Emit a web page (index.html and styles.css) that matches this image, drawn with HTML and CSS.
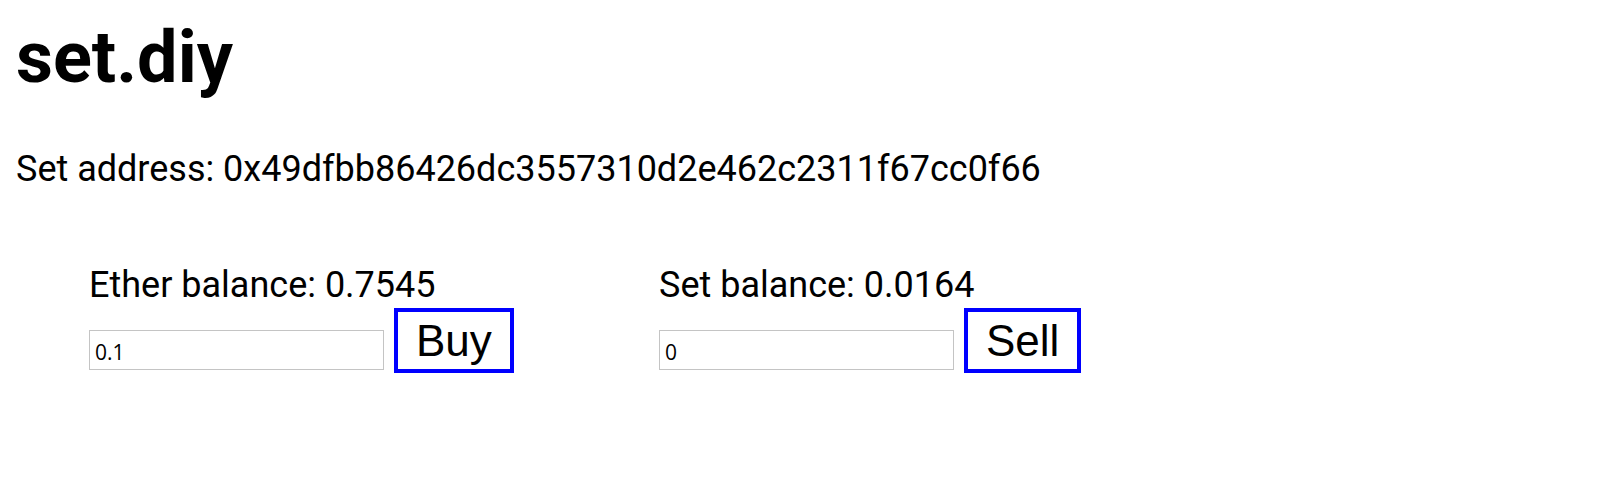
FILE: index.html
```html
<!DOCTYPE html>
<html>
<head>
<meta charset="utf-8">
<title>set.diy</title>
<link rel="stylesheet" href="styles.css">
</head>
<body>
<div class="page">
  <h1 class="title">set.diy</h1>
  <p class="address">Set address: 0x49dfbb86426dc3557310d2e462c2311f67cc0f66</p>
  <div class="panels">
    <div class="panel">
      <div class="balance">Ether balance: 0.7545</div>
      <div class="trade">
        <input class="amount" type="text" value="0.1">
        <button class="action">Buy</button>
      </div>
    </div>
    <div class="panel">
      <div class="balance">Set balance: 0.0164</div>
      <div class="trade">
        <input class="amount" type="text" value="0">
        <button class="action">Sell</button>
      </div>
    </div>
  </div>
</div>
</body>
</html>
```
FILE: styles.css
```css
html, body {
  margin: 0;
  padding: 0;
  background: #ffffff;
  color: #000000;
}

.page {
  padding: 0 16px;
  font-family: Roboto, "Liberation Sans", sans-serif;
}

.title {
  margin: 0;
  padding-top: 18px;
  font-size: 72px;
  font-weight: 700;
  line-height: 80px;
}

.address {
  margin: 49px 0 0 0;
  font-size: 36px;
  line-height: 44px;
}

.panels {
  display: grid;
  grid-template-columns: 570px 570px;
  padding-left: 73px;
  margin-top: 72px;
}

.balance {
  font-size: 36px;
  line-height: 44px;
}

.trade {
  display: flex;
  align-items: flex-end;
  gap: 10px;
  margin-top: 1px;
}

.amount {
  box-sizing: border-box;
  width: 295px;
  height: 40px;
  margin: 0 0 3px 0;
  padding: 4px 5px 0 5px;
  border: 1px solid #c4c4c4;
  border-radius: 0;
  font-family: "Open Sans", "Liberation Sans", sans-serif;
  font-size: 21px;
  color: #000;
  background: #fff;
  outline: none;
}

.action {
  box-sizing: border-box;
  height: 65px;
  margin: 0;
  padding: 0 18px;
  border: 4px solid #0000ff;
  border-radius: 0;
  background: #ffffff;
  color: #000;
  font-family: "Liberation Sans", Arial, sans-serif;
  font-size: 44px;
  line-height: 50px;
}
```
